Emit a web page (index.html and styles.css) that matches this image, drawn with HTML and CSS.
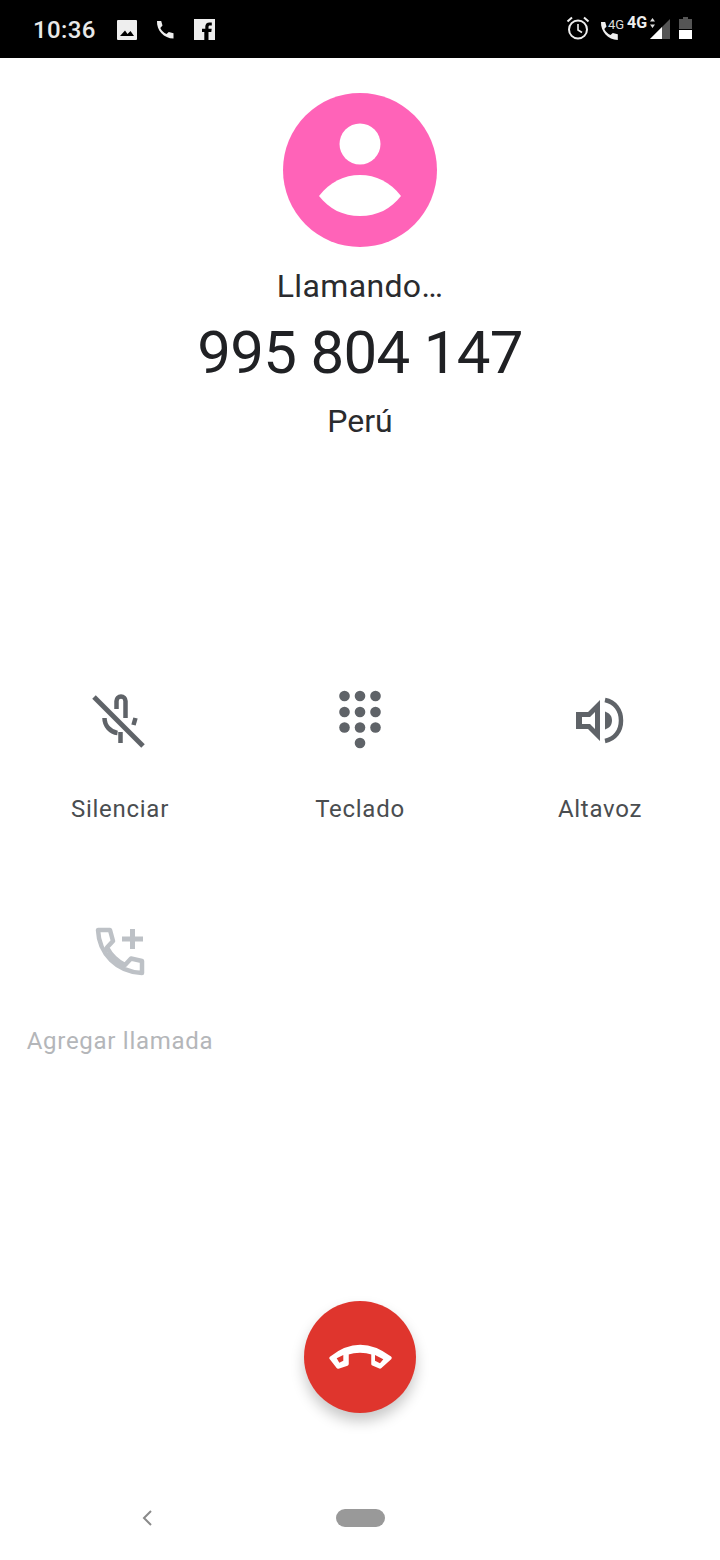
FILE: index.html
```html
<!DOCTYPE html>
<html lang="es">
<head>
<meta charset="utf-8">
<title>Llamando</title>
<link rel="stylesheet" href="styles.css">
</head>
<body>
<div class="phone">
  <header class="status">
    <span class="time">10:36</span>
    <svg class="st st-img" viewBox="0 0 20 20"><path fill="#eee" fill-rule="evenodd" d="M1 0h18a1 1 0 0 1 1 1v18a1 1 0 0 1-1 1H1a1 1 0 0 1-1-1V1a1 1 0 0 1 1-1zM3 16h14l-3.500-5-3 3-2.500-3.500z"/></svg>
    <svg class="st st-call" viewBox="0 0 20 20"><path fill="#eee" d="M2 1h4.200l1.300 4.600-2.200 2.300c1.300 2.700 3.400 4.800 6.200 6.200l2.300-2.200L18.500 13.200V18.500C9 18.500 1.500 10.500 2 1z"/></svg>
    <svg class="st st-fb" viewBox="0 0 21 21"><path fill="#eee" fill-rule="evenodd" d="M0 0h21v21h-6.500v-8h2.800l.4-3.200h-3.200V8c0-1 .3-1.600 1.600-1.600h1.700V3.500c-.4 0-1.300-.1-2.400-.1-2.500 0-4.100 1.500-4.100 4.200v2.200H8V13h2.300v8H0z"/></svg>
    <div class="st-right">
      <svg class="st st-alarm" viewBox="0 0 24 24"><circle cx="12" cy="13.500" r="9" fill="none" stroke="#eee" stroke-width="2"/><path d="M12 8v6l4 2.500" fill="none" stroke="#eee" stroke-width="1.600"/><path d="M1.500 5.500 6 1.500M22.500 5.500 18 1.500" stroke="#eee" stroke-width="2" fill="none"/></svg>
      <div class="st-volte">
        <svg class="st st-call2" viewBox="0 0 20 20"><path fill="#eee" d="M2 1h4.200l1.300 4.600-2.200 2.300c1.300 2.700 3.400 4.800 6.200 6.200l2.300-2.200 5 1.300V19C9 19 1.500 10.500 2 1z"/></svg>
        <span class="g-thin">4G</span>
      </div>
      <span class="g-bold">4G</span>
      <div class="st-net">
        <svg class="st st-signal" viewBox="0 0 20 20"><path fill="#555" d="M20 0v20H0z"/><path fill="#fff" d="M12 8v12H0z"/></svg>
        <svg class="st st-arrows" viewBox="0 0 5 10"><path fill="#ddd" d="M2.500 0 5 3.500H0zM2.500 10 0 6.500h5z"/></svg>
      </div>
      <svg class="st st-batt" viewBox="0 0 13 22"><path fill="#555" d="M4 0h5v2h4v10H0V2h4z"/><path fill="#fff" d="M0 13h13v9H0z"/></svg>
    </div>
  </header>

  <section class="caller">
    <svg class="avatar" viewBox="0 0 154 154"><circle cx="77" cy="77" r="77" fill="#ff63b8"/><circle cx="77" cy="51" r="20.500" fill="#fff"/><path fill="#fff" d="M36 103C47 89 61 82 77 82s30 7 41 21c-10 13-24 20-41 20s-31-7-41-20z"/></svg>
    <div class="state">Llamando…</div>
    <div class="number">995 804 147</div>
    <div class="region">Perú</div>
  </section>

  <section class="actions">
    <div class="action">
      <svg class="ic" viewBox="0 0 80 80"><g fill="none" stroke="#5f6368" stroke-width="4.500"><path d="M36.500 29V21a4.500 4.500 0 0 1 9 0V38"/><path d="M24.500 38c0 8 6 14 13 15M40.500 52v11"/><path d="M55.500 38l-2 7"/><path stroke-width="5" d="M14 17l49 49"/></g></svg>
      <span class="label">Silenciar</span>
    </div>
    <div class="action">
      <svg class="ic" viewBox="0 0 80 80"><g fill="#5f6368"><circle cx="24.500" cy="16" r="5.300"/><circle cx="40" cy="16" r="5.300"/><circle cx="55.500" cy="16" r="5.300"/><circle cx="24.500" cy="32" r="5.300"/><circle cx="40" cy="32" r="5.300"/><circle cx="55.500" cy="32" r="5.300"/><circle cx="24.500" cy="47.500" r="5.300"/><circle cx="40" cy="47.500" r="5.300"/><circle cx="55.500" cy="47.500" r="5.300"/><circle cx="40" cy="63" r="5.300"/></g></svg>
      <span class="label">Teclado</span>
    </div>
    <div class="action">
      <svg class="ic" viewBox="0 0 80 80"><g fill="#5f6368"><path fill-rule="evenodd" d="M16 32h12l12-12v41L28 49H16zM22 37v7h8l5 5V32l-5 5z"/><path d="M45 31.500c4.500 1.500 7 4.500 7 9s-2.500 7.500-7 9z"/></g><path fill="none" stroke="#5f6368" stroke-width="4.500" d="M45 20c10 2 16 10 16 20.500S55 59 45 61"/></svg>
      <span class="label">Altavoz</span>
    </div>
    <div class="action off">
      <svg class="ic" viewBox="0 0 80 80"><g fill="none" stroke="#bdc1c6" stroke-width="4.500" stroke-linejoin="round"><path d="M18 18H30L33 29 27 35.500Q33 47 45 53L51 46.500 62 49V61C37 60 19 42 18 18z"/><path stroke-width="5" d="M42 27H63M52.500 17V37"/></g></svg>
      <span class="label">Agregar llamada</span>
    </div>
  </section>

  <div class="end-wrap">
    <button class="end" type="button" aria-label="Colgar">
      <svg class="end-ic" viewBox="0 0 112 112"><path fill="#fff" stroke="#fff" stroke-width="3.500" stroke-linejoin="round" d="M27 57Q56 34 86 57L76 66 69 63V52Q56 48 43 52V63L34 66z"/><path fill="#df352d" d="M32.700 57.300 39.300 54v5.700l-4 2zM71 54l8.300 4.300-3.300 4-5-2.600z"/></svg>
    </button>
  </div>

  <nav class="nav">
    <svg class="back" viewBox="0 0 12 18"><path d="M10 2 3 9l7 7" fill="none" stroke="#8a8a8a" stroke-width="2"/></svg>
    <span class="pill"></span>
  </nav>
</div>
</body>
</html>
```
FILE: styles.css
```css
* { box-sizing: border-box; }
html, body { margin: 0; padding: 0; background: #fff; }
.phone {
  width: 720px;
  height: 1560px;
  display: flex;
  flex-direction: column;
  overflow: hidden;
  font-family: Roboto, "Noto Sans", sans-serif;
  color: #202124;
}
.status {
  height: 58px;
  background: #000;
  display: flex;
  align-items: center;
  padding-left: 33px;
  color: #eee;
  flex: none;
}
.time { font-size: 24px; font-weight: 500; letter-spacing: .4px; width: 84px; padding-top: 1px; color: #e8e8e8; }
.st { display: block; flex: none; }
.st-img { width: 20px; height: 20px; margin-top: 1px; }
.st-call { width: 20px; height: 20px; margin-left: 18px; margin-top: 1px; }
.st-fb { width: 21px; height: 21px; margin-left: 19px; margin-top: 1px; }
.st-right { margin-left: auto; display: flex; align-items: flex-start; height: 58px; padding-right: 28px; }
.st-alarm { width: 24px; height: 24px; margin-top: 16px; }
.st-volte { width: 28px; height: 58px; margin-left: 9px; position: relative; }
.st-call2 { width: 20px; height: 20px; margin-top: 21px; }
.g-thin { position: absolute; left: 9px; top: 17px; font-size: 13px; line-height: 16px; color: #ddd; }
.g-bold { font-size: 16px; font-weight: 700; line-height: 16px; margin-top: 15px; color: #eee; width: 23px; }
.st-net { position: relative; width: 20px; height: 58px; }
.st-signal { width: 20px; height: 20px; margin-top: 19px; }
.st-arrows { position: absolute; left: 0; top: 18px; width: 5px; height: 10px; }
.st-batt { width: 13px; height: 22px; margin-top: 17px; margin-left: 9px; }

.caller { display: flex; flex-direction: column; align-items: center; padding-top: 35px; flex: none; height: 574px; }
.avatar { width: 154px; height: 154px; display: block; }
.state { font-size: 32px; line-height: 40px; margin-top: 19px; letter-spacing: .35px; color: #2a2b2e; }
.number { font-size: 60px; line-height: 70px; margin-top: 12px; letter-spacing: -.7px; }
.region { font-size: 32px; line-height: 40px; margin-top: 13px; color: #2a2b2e; }

.actions { display: grid; grid-template-columns: repeat(3, 240px); grid-auto-rows: 232px; flex: none; height: 656px; padding-top: 48px; }
.action { display: flex; flex-direction: column; align-items: center; }
.ic { width: 80px; height: 80px; display: block; }
.label { font-size: 24px; line-height: 32px; margin-top: 33px; letter-spacing: .72px; color: #4a4d50; white-space: nowrap; }
.off .label { color: #b4b6b9; }

.end-wrap { display: flex; justify-content: center; flex: none; height: 221px; padding-top: 13px; }
.end { width: 112px; height: 112px; border: 0; padding: 0; border-radius: 50%; background: #df352d; box-shadow: 0 8px 14px rgba(0,0,0,.22); display: block; }
.end-ic { width: 112px; height: 112px; display: block; }

.nav { display: flex; align-items: center; padding-left: 141px; height: 18px; flex: none; }
.back { width: 12px; height: 18px; display: block; }
.pill { width: 49px; height: 18px; border-radius: 9px; background: #999; margin-left: 183px; }
```
